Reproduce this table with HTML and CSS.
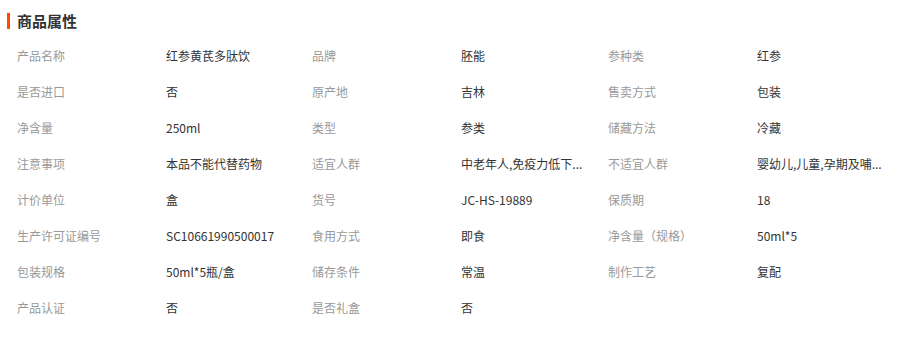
FILE: index.html
```html
<!DOCTYPE html>
<html lang="zh-CN">
<head>
<meta charset="utf-8">
<title>商品属性</title>
<link rel="stylesheet" href="styles.css">
</head>
<body>
<div class="panel">
  <h2 class="title">商品属性</h2>
  <div class="grid">
    <div class="lbl">产品名称</div><div class="val">红参黄芪多肽饮</div>
    <div class="lbl">品牌</div><div class="val">胚能</div>
    <div class="lbl">参种类</div><div class="val">红参</div>

    <div class="lbl">是否进口</div><div class="val">否</div>
    <div class="lbl">原产地</div><div class="val">吉林</div>
    <div class="lbl">售卖方式</div><div class="val">包装</div>

    <div class="lbl">净含量</div><div class="val">250ml</div>
    <div class="lbl">类型</div><div class="val">参类</div>
    <div class="lbl">储藏方法</div><div class="val">冷藏</div>

    <div class="lbl">注意事项</div><div class="val">本品不能代替药物</div>
    <div class="lbl">适宜人群</div><div class="val">中老年人,免疫力低下...</div>
    <div class="lbl">不适宜人群</div><div class="val">婴幼儿,儿童,孕期及哺...</div>

    <div class="lbl">计价单位</div><div class="val">盒</div>
    <div class="lbl">货号</div><div class="val">JC-HS-19889</div>
    <div class="lbl">保质期</div><div class="val">18</div>

    <div class="lbl">生产许可证编号</div><div class="val">SC10661990500017</div>
    <div class="lbl">食用方式</div><div class="val">即食</div>
    <div class="lbl">净含量（规格）</div><div class="val">50ml*5</div>

    <div class="lbl">包装规格</div><div class="val">50ml*5瓶/盒</div>
    <div class="lbl">储存条件</div><div class="val">常温</div>
    <div class="lbl">制作工艺</div><div class="val">复配</div>

    <div class="lbl">产品认证</div><div class="val">否</div>
    <div class="lbl">是否礼盒</div><div class="val">否</div>
  </div>
</div>
</body>
</html>
```

FILE: styles.css
```css
html, body {
  margin: 0;
  padding: 0;
  background: #fff;
}

body {
  font-family: "Microsoft YaHei", "Noto Sans CJK SC", sans-serif;
  font-size: 12px;
  color: #333;
}

.panel {
  padding: 12px 0 0 7px;
}

.title {
  margin: 1px 0 0;
  padding-left: 7px;
  border-left: 3px solid #ff4a00;
  font-size: 15px;
  font-weight: bold;
  line-height: 16px;
  height: 16px;
  color: #333;
}

.grid {
  display: grid;
  grid-template-columns: 149px 146px 149px 147px 149px 134px;
  grid-auto-rows: 36px;
  margin-top: 9px;
  padding-left: 10px;
}

.lbl,
.val {
  line-height: 36px;
  white-space: nowrap;
}

.lbl {
  color: #999;
}

.val {
  color: #333;
}
```
